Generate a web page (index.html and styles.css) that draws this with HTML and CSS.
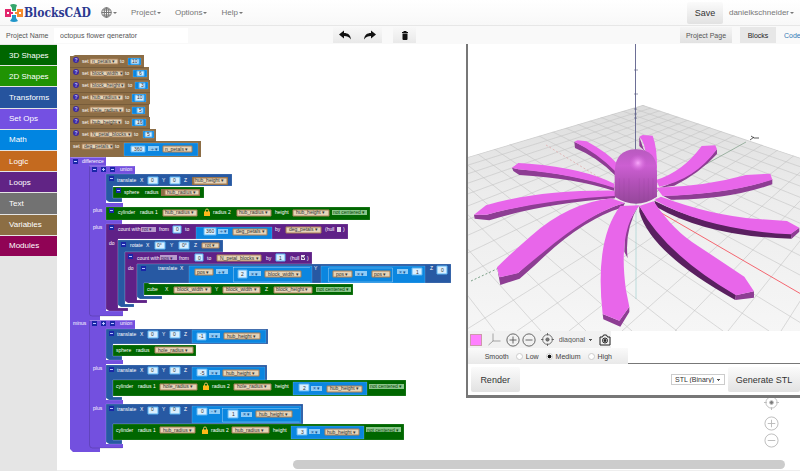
FILE: index.html
```html
<!DOCTYPE html>
<html lang="en">
<head>
    <meta charset="UTF-8">
    <meta name="viewport" content="width=device-width, initial-scale=1.0">
    <title>BlocksCAD</title>
    <link rel="stylesheet" href="styles.css">
</head>
<body>
    <!-- shared icons -->
    <svg class="defs" width="0" height="0">
        <symbol id="i-plus" viewBox="0 0 16 16"><circle cx="8" cy="8" r="7"/><path d="M8 4v8M4 8h8"/></symbol>
        <symbol id="i-minus" viewBox="0 0 16 16"><circle cx="8" cy="8" r="7"/><path d="M4 8h8"/></symbol>
        <symbol id="i-center" viewBox="0 0 16 16"><circle cx="8" cy="8" r="6"/><circle class="dot" cx="8" cy="8" r="2"/><path d="M8 0v3M8 13v3M0 8h3M13 8h3"/></symbol>
        <symbol id="i-lock" viewBox="0 0 6 8"><path d="M1.500 4V2.500a1.500 1.500 0 0 1 3 0V4" fill="none" stroke="#e8c060"/><path d="M0 3.500h6V8H0z" fill="#ffb818"/></symbol>
    </svg>

    <header class="navbar">
        <a href="#" class="brand">
            <svg width="20" height="20" viewBox="0 0 20 20">
                <path d="M6 2q3-2 7 0l-1 3v3H8V5z" fill="#35a66c"/>
                <path d="M1 6h6v3h2v2H7v3H1z" fill="#e2276d"/>
                <path d="M13 6h6v8h-6v-3h-2V9h2z" fill="#f58a2c"/>
                <path d="M8 12h4v3l2 3q-4 2-8 0l2-3z" fill="#2096c9"/>
                <path d="M3 9h2v2H3zM15 9h2v2h-2z" fill="#fff"/>
            </svg>
            <span>BlocksCAD</span>
        </a>
        <nav class="menu">
            <a href="#" class="globe" aria-label="Language">
                <svg width="11" height="11" viewBox="0 0 22 22"><circle cx="11" cy="11" r="9.500"/><ellipse cx="11" cy="11" rx="4.500" ry="9.500"/><path d="M11 1v20M1 11h20M3 6h16M3 16h16"/></svg><i class="caret"></i>
            </a>
            <a href="#">Project<i class="caret"></i></a>
            <a href="#">Options<i class="caret"></i></a>
            <a href="#">Help<i class="caret"></i></a>
        </nav>
        <button class="btn save">Save</button>
        <a href="#" class="user">danielkschneider<i class="caret"></i></a>
    </header>

    <div class="toolbar">
        <label for="project-name">Project Name</label>
        <input type="text" id="project-name" value="octopus flower generator">
        <div class="history">
            <button aria-label="Undo"><svg width="12" height="10" viewBox="0 0 24 20"><path d="M0 9L10 1v5c8 0 13 4 14 13-4-6-8-7-14-7v5z"/></svg></button>
            <button aria-label="Redo"><svg width="12" height="10" viewBox="0 0 24 20"><path d="M24 9L14 1v5C6 6 1 10 0 19c4-6 8-7 14-7v5z"/></svg></button>
        </div>
        <button class="trash" aria-label="Delete"><svg width="6" height="9" viewBox="0 0 12 18"><path d="M0 2h3V0h6v2h3v2H0zM1 5h10v11q0 2-2 2H3q-2 0-2-2z"/></svg></button>
        <div class="tabs">
            <button class="page">Project Page</button>
            <button class="active">Blocks</button>
            <a href="#">Code</a>
        </div>
    </div>

    <main>
        <aside>
            <nav class="toolbox">
                <a href="#" class="shapes3d">3D Shapes</a>
                <a href="#" class="shapes2d">2D Shapes</a>
                <a href="#" class="transforms">Transforms</a>
                <a href="#" class="setops">Set Ops</a>
                <a href="#" class="math">Math</a>
                <a href="#" class="logic">Logic</a>
                <a href="#" class="loops">Loops</a>
                <a href="#" class="textcat">Text</a>
                <a href="#" class="variables">Variables</a>
                <a href="#" class="modules">Modules</a>
            </nav>
        </aside>

        <section class="workspace">
            <svg class="blocks" width="100%" height="100%">
                <g transform="translate(-57 -44)">
                    <!-- variables -->
                    <path class="b-var" d="M70 56h3l2-1h69v12h5v13h1v24h-1v13h1v12h6v12h45v16H70z"/>
                    <path class="edge" d="M70 67.500h74M70 79.500h79M70 92.500h80M70 104.500h80M70 116.500h79M70 128.500h80M70 141.500h86"/>
                    <path class="b-math" d="M128 58h13v7h-13zM133 70h14v7h-14zM135 82h13v7h-13zM132 94h14v8h-14zM132 107h13v7h-13zM132 119h14v7h-14zM143 131h11v7h-11zM124 143h74v13h-74z"/>
                    <path class="f-var" d="M90 59h28v5H90zM90 71h33v5H90zM90 83h35v5H90zM90 95h33v5H90zM90 107h34v5H90zM90 119h32v5H90zM90 132h42v5H90zM82 144h31v5H82zM163 146h29v6h-29z"/>
                    <path class="f-num" d="M131 59h8v5h-8zM137 71h7v5h-7zM139 83h6v5h-6zM135 95h9v6h-9zM137 108h6v5h-6zM135 120h8v5h-8zM145 132h7v5h-7zM131 146h14v6h-14z"/>
                    <path class="f-op" d="M148 146h11v5h-11z"/>
                    <g class="help"><circle cx="76" cy="60" r="3"/><circle cx="76" cy="72" r="3"/><circle cx="76" cy="85" r="3"/><circle cx="76" cy="97" r="3"/><circle cx="76" cy="109" r="3"/><circle cx="76" cy="121" r="3"/><circle cx="76" cy="133" r="3"/></g>
                    <g class="mark"><text x="76" y="62">?</text><text x="76" y="74">?</text><text x="76" y="87">?</text><text x="76" y="99">?</text><text x="76" y="111">?</text><text x="76" y="123">?</text><text x="76" y="135">?</text></g>
                    <text y="63"><tspan x="82">set</tspan><tspan x="92" class="d">n_petals ▾</tspan><tspan x="120">to</tspan><tspan x="132" class="d">10</tspan></text>
                    <text y="75"><tspan x="82">set</tspan><tspan x="92" class="d">block_width ▾</tspan><tspan x="125">to</tspan><tspan x="139" class="d">6</tspan></text>
                    <text y="87"><tspan x="82">set</tspan><tspan x="92" class="d">block_height ▾</tspan><tspan x="128">to</tspan><tspan x="141" class="d">3</tspan></text>
                    <text y="99"><tspan x="82">set</tspan><tspan x="92" class="d">hub_radius ▾</tspan><tspan x="125">to</tspan><tspan x="137" class="d">10</tspan></text>
                    <text y="112"><tspan x="82">set</tspan><tspan x="92" class="d">hole_radius ▾</tspan><tspan x="126">to</tspan><tspan x="139" class="d">5</tspan></text>
                    <text y="124"><tspan x="82">set</tspan><tspan x="92" class="d">hub_height ▾</tspan><tspan x="125">to</tspan><tspan x="137" class="d">16</tspan></text>
                    <text y="136"><tspan x="82">set</tspan><tspan x="92" class="d">N_petal_blocks ▾</tspan><tspan x="134">to</tspan><tspan x="147" class="d">5</tspan></text>
                    <text y="148"><tspan x="73">set</tspan><tspan x="84" class="d">deg_petals ▾</tspan><tspan x="115">to</tspan></text>
                    <text y="151"><tspan x="134" class="d">360</tspan><tspan x="151" class="o">÷ ▾</tspan><tspan x="165" class="d">n_petals ▾</tspan></text>

                    <!-- difference -->
                    <path class="b-set" d="M70 157h36v9h29v8h-29v29h17v4h-17v13h16v4h-16v87h17v5h-23v4h35v9h-29v31h17v4h-17v36h17v4h-17v40h17v4h-23v4H73l-3-3z"/>
                    <path class="edge" d="M89.500 166v148q0 2 3 2h30M89.500 320v125q0 3 3 3h30"/>
                    <path class="edge light" d="M70.500 157.500h35M89.500 166h45M89.500 320.500h45"/>
                    <g class="gear"><path d="M73 159h5v5h-5zM92 167h5v5h-5zM101 167h5v5h-5zM110 167h5v5h-5zM92 321h5v5h-5zM101 321h5v5h-5zM110 321h5v5h-5z"/></g>
                    <path class="plus" d="M74 161.500h3M93 169.500h3M102 169.500h3M103.500 168v3M111 169.500h3M93 323.500h3M102 323.500h3M103.500 322v3M111 323.500h3"/>
                    <text x="82" y="163">difference</text>
                    <text x="120" y="171">union</text>
                    <text x="93" y="212">plus</text>
                    <text x="93" y="229">plus</text>
                    <text x="73" y="325">minus</text>
                    <text x="120" y="325">union</text>
                    <text x="93" y="370">plus</text>
                    <text x="93" y="410">plus</text>

                    <!-- translate / sphere -->
                    <path class="b-trans" d="M106 174h126v12H113v12h9v4h-13l-3-2z"/>
                    <path class="b-3d" d="M113 187h91v11h-91z"/>
                    <path class="b-varout" d="M192 177h36v8h-36zM161 189h39v7h-39z"/>
                    <path class="f-var" d="M194 178h33v6h-33zM165 190h34v5h-34z"/>
                    <path class="f-num" d="M148 177h10v7h-10zM170 177h10v7h-10z"/>
                    <text y="182"><tspan x="117">translate</tspan><tspan x="140">X</tspan><tspan x="151" class="d">0</tspan><tspan x="162">Y</tspan><tspan x="173" class="d">0</tspan><tspan x="184">Z</tspan><tspan x="195" class="d">hub_height ▾</tspan></text>
                    <text y="194"><tspan x="124">sphere</tspan><tspan x="145">radius</tspan><tspan x="167" class="d">hub_radius ▾</tspan></text>

                    <!-- cylinder -->
                    <path class="b-3d" d="M106 207h264v13H106z"/>
                    <path class="f-var" d="M163 210h34v6h-34zM237 210h34v6h-34zM293 210h36v6h-36z"/>
                    <path class="f-green" d="M332 210h35v5h-35z"/>
                    <use href="#i-lock" x="204" y="208" width="6" height="8"/>
                    <text y="214"><tspan x="118">cylinder</tspan><tspan x="140">radius 1</tspan><tspan x="165" class="d">hub_radius ▾</tspan><tspan x="213">radius 2</tspan><tspan x="239" class="d">hub_radius ▾</tspan><tspan x="275">height</tspan><tspan x="296" class="d">hub_height ▾</tspan><tspan x="333" class="g">not centered ▾</tspan></text>

                    <!-- count with pos -->
                    <path class="b-loop" d="M106 224h242v15H118v69h10v3h-19l-3-2z"/>
                    <path class="b-math" d="M196 227h76v12h-76z"/>
                    <path class="f-loop" d="M141 227h15v5h-15z"/>
                    <path class="f-num" d="M173 226h8v7h-8zM204 228h12v7h-12z"/>
                    <path class="f-op" d="M218 229h10v5h-10z"/>
                    <path class="f-var" d="M233 229h34v6h-34zM286 227h35v6h-35z"/>
                    <path class="f-box" d="M337 227h4v5h-4z"/>
                    <text y="231"><tspan x="118">count with</tspan><tspan x="142" class="p">rot ▾</tspan><tspan x="159">from</tspan><tspan x="176" class="d">0</tspan><tspan x="185">to</tspan><tspan x="275">by</tspan><tspan x="289" class="d">deg_petals ▾</tspan><tspan x="325">(hull</tspan><tspan x="343">)</tspan></text>
                    <text y="233"><tspan x="206" class="d">360</tspan><tspan x="220" class="o">÷ ▾</tspan><tspan x="236" class="d">deg_petals ▾</tspan></text>
                    <text x="109" y="245">do</text>

                    <!-- rotate -->
                    <path class="b-trans" d="M118 240h105v12h-98v52h9v3h-13l-3-2z"/>
                    <path class="f-num" d="M155 242h10v7h-10zM179 242h10v7h-10z"/>
                    <path class="f-var" d="M202 243h17v5h-17z"/>
                    <text y="247"><tspan x="130">rotate</tspan><tspan x="146">X</tspan><tspan x="157" class="d">0°</tspan><tspan x="170">Y</tspan><tspan x="182" class="d">0°</tspan><tspan x="194">Z</tspan><tspan x="205" class="d">rot ▾</tspan></text>

                    <!-- inner count with pos -->
                    <path class="b-loop" d="M125 252h187v12H137v36h10v3h-19l-3-2z"/>
                    <path class="f-loop" d="M160 255h17v5h-17z"/>
                    <path class="f-num" d="M195 254h8v7h-8zM276 254h9v7h-9z"/>
                    <path class="f-var" d="M217 255h44v6h-44z"/>
                    <path class="f-box" d="M301 255h4v5h-4z"/>
                    <path class="tick" d="M302 257l1 2 3-4"/>
                    <text y="260"><tspan x="137">count with</tspan><tspan x="161" class="p">pos ▾</tspan><tspan x="179">from</tspan><tspan x="198" class="d">0</tspan><tspan x="207">to</tspan><tspan x="220" class="d">N_petal_blocks ▾</tspan><tspan x="266">by</tspan><tspan x="279" class="d">1</tspan><tspan x="290">(hull</tspan><tspan x="307">)</tspan></text>
                    <text x="128" y="270">do</text>

                    <!-- inner translate -->
                    <path class="b-trans" d="M137 264h314v19H144v13h18v3h-22l-3-2z"/>
                    <path class="b-math" d="M189 266h123v17H189zM321 266h104v17H321z"/>
                    <path class="edge light" d="M233.500 267v15h77M233 267.500h77M328.500 268v14h64v-14z"/>
                    <path class="f-var" d="M195 269h18v6h-18zM265 271h36v6h-36zM333 271h19v6h-19zM372 271h18v6h-18z"/>
                    <path class="f-op" d="M216 269h12v5h-12zM249 271h12v5h-12zM355 271h12v5h-12zM397 269h11v5h-11z"/>
                    <path class="f-num" d="M238 270h9v8h-9zM412 268h10v7h-10zM437 266h10v8h-10z"/>
                    <text y="270"><tspan x="158">translate</tspan><tspan x="180">X</tspan><tspan x="314">Y</tspan><tspan x="430">Z</tspan></text>
                    <text y="274"><tspan x="197" class="d">pos ▾</tspan><tspan x="218" class="o">+ ▾</tspan><tspan x="399" class="o">× ▾</tspan><tspan x="416" class="d">1</tspan></text>
                    <text y="276"><tspan x="241" class="d">2</tspan><tspan x="251" class="o">× ▾</tspan><tspan x="268" class="d">block_width ▾</tspan><tspan x="336" class="d">pos ▾</tspan><tspan x="357" class="o">× ▾</tspan><tspan x="374" class="d">pos ▾</tspan></text>
                    <text x="441" y="272" class="d">0</text>

                    <!-- cube -->
                    <path class="b-3d" d="M144 283h4l2 1h203v11H144z"/>
                    <path class="f-var" d="M174 287h37v6h-37zM223 287h37v6h-37zM274 287h38v6h-38z"/>
                    <path class="f-green" d="M316 287h35v5h-35z"/>
                    <text y="291"><tspan x="147">cube</tspan><tspan x="165">X</tspan><tspan x="177" class="d">block_width ▾</tspan><tspan x="215">Y</tspan><tspan x="226" class="d">block_width ▾</tspan><tspan x="265">Z</tspan><tspan x="276" class="d">block_height ▾</tspan><tspan x="317" class="g">not centered ▾</tspan></text>

                    <!-- minus: translate / sphere -->
                    <path class="b-trans" d="M106 329h162v15H113v12h9v4h-13l-3-2z"/>
                    <path class="b-3d" d="M113 345h83v11h-83z"/>
                    <path class="b-math" d="M192 330h74v13h-74z"/>
                    <path class="f-num" d="M148 331h10v7h-10zM170 331h10v7h-10zM197 333h9v7h-9z"/>
                    <path class="f-op" d="M209 333h11v5h-11z"/>
                    <path class="f-var" d="M224 333h36v6h-36zM155 347h38v6h-38z"/>
                    <text y="336"><tspan x="117">translate</tspan><tspan x="140">X</tspan><tspan x="151" class="d">0</tspan><tspan x="162">Y</tspan><tspan x="173" class="d">0</tspan><tspan x="184">Z</tspan></text>
                    <text y="338"><tspan x="199" class="d">-1</tspan><tspan x="211" class="o">× ▾</tspan><tspan x="227" class="d">hub_height ▾</tspan></text>
                    <text y="352"><tspan x="116">sphere</tspan><tspan x="136">radius</tspan><tspan x="158" class="d">hole_radius ▾</tspan></text>

                    <!-- translate / cylinder -->
                    <path class="b-trans" d="M106 365h161v15H113v17h9v3h-13l-3-2z"/>
                    <path class="b-3d" d="M113 380h293v16H113z"/>
                    <path class="b-math" d="M192 367h73v13h-73zM293 382h74v13h-74z"/>
                    <path class="f-num" d="M148 367h10v7h-10zM170 367h10v7h-10zM197 369h10v7h-10zM299 384h10v7h-10z"/>
                    <path class="f-op" d="M209 370h11v5h-11zM311 386h11v5h-11z"/>
                    <path class="f-var" d="M223 370h36v6h-36zM160 384h37v6h-37zM234 384h37v6h-37zM327 386h35v6h-35z"/>
                    <path class="f-green" d="M369 384h35v5h-35z"/>
                    <use href="#i-lock" x="203" y="382" width="6" height="8"/>
                    <text y="372"><tspan x="117">translate</tspan><tspan x="140">X</tspan><tspan x="151" class="d">0</tspan><tspan x="162">Y</tspan><tspan x="173" class="d">0</tspan><tspan x="184">Z</tspan></text>
                    <text y="375"><tspan x="200" class="d">-5</tspan><tspan x="211" class="o">× ▾</tspan><tspan x="226" class="d">hub_height ▾</tspan></text>
                    <text y="388"><tspan x="116">cylinder</tspan><tspan x="138">radius 1</tspan><tspan x="163" class="d">hole_radius ▾</tspan><tspan x="212">radius 2</tspan><tspan x="237" class="d">hole_radius ▾</tspan><tspan x="275">height</tspan><tspan x="370" class="g">not centered ▾</tspan></text>
                    <text y="390"><tspan x="303" class="d">2</tspan><tspan x="313" class="o">× ▾</tspan><tspan x="330" class="d">hub_height ▾</tspan></text>

                    <!-- last translate / cylinder -->
                    <path class="b-trans" d="M106 404h197v20H113v16h9v4h-13l-3-2z"/>
                    <path class="b-3d" d="M113 424h291v16H113z"/>
                    <path class="b-math" d="M192 406h109v17H192zM291 426h73v13h-73z"/>
                    <path class="edge light" d="M222.500 408v14h77M222 408.500h77"/>
                    <path class="f-num" d="M148 407h10v7h-10zM170 407h10v7h-10zM197 408h10v7h-10zM228 410h10v8h-10zM297 428h10v7h-10z"/>
                    <path class="f-op" d="M209 409h11v5h-11zM241 412h11v5h-11zM309 429h11v5h-11z"/>
                    <path class="f-var" d="M256 411h36v6h-36zM160 427h35v6h-35zM232 427h37v6h-37zM325 429h34v6h-34z"/>
                    <path class="f-green" d="M366 427h35v5h-35z"/>
                    <use href="#i-lock" x="202" y="426" width="6" height="8"/>
                    <text y="411"><tspan x="117">translate</tspan><tspan x="140">X</tspan><tspan x="151" class="d">0</tspan><tspan x="162">Y</tspan><tspan x="173" class="d">0</tspan><tspan x="184">Z</tspan></text>
                    <text y="413"><tspan x="201" class="d">0</tspan><tspan x="211" class="o">- ▾</tspan></text>
                    <text y="416"><tspan x="232" class="d">1</tspan><tspan x="243" class="o">× ▾</tspan><tspan x="259" class="d">hub_height ▾</tspan></text>
                    <text y="432"><tspan x="116">cylinder</tspan><tspan x="138">radius 1</tspan><tspan x="163" class="d">hub_radius ▾</tspan><tspan x="211">radius 2</tspan><tspan x="235" class="d">hub_radius ▾</tspan><tspan x="273">height</tspan><tspan x="367" class="g">not centered ▾</tspan></text>
                    <text y="434"><tspan x="301" class="d">3</tspan><tspan x="311" class="o">× ▾</tspan><tspan x="327" class="d">hub_height ▾</tspan></text>

                    <g class="gear"><path d="M109 176h5v5h-5zM116 188h5v5h-5zM109 208h5v5h-5zM109 225h5v5h-5zM121 242h5v5h-5zM128 254h5v5h-5zM141 266h5v5h-5zM109 331h5v5h-5zM109 367h5v5h-5zM109 406h5v5h-5z"/></g>
                    <path class="plus" d="M110 178.500h3M117 190.500h3M110 210.500h3M110 227.500h3M122 244.500h3M129 256.500h3M142 268.500h3M110 333.500h3M110 369.500h3M110 408.500h3"/>
                </g>
            </svg>

            <div class="zoomer">
                <button aria-label="Center"><svg width="15" height="15"><use href="#i-center"/></svg></button>
                <button aria-label="Zoom in"><svg width="15" height="15"><use href="#i-plus"/></svg></button>
                <button aria-label="Zoom out"><svg width="15" height="15"><use href="#i-minus"/></svg></button>
            </div>
            <div class="scrollbar"></div>

            <div class="viewer">
                <svg class="scene" viewBox="467 44 333 287" preserveAspectRatio="xMinYMin slice">
                    <defs>
                        <clipPath id="floor"><path d="M642 105L467 157v174h333V158z"/></clipPath>
                        <linearGradient id="ground" x1="0" y1="0" x2="0" y2="1"><stop offset="0" stop-color="#dcdcdc"/><stop offset=".4" stop-color="#ececec"/><stop offset="1" stop-color="#f6f6f6"/></linearGradient>
                        <linearGradient id="hub" x1="0" y1="0" x2="0" y2="1"><stop offset="0" stop-color="#b85abf"/><stop offset=".3" stop-color="#cc5fd2"/><stop offset=".6" stop-color="#b352b9"/><stop offset="1" stop-color="#95479a"/></linearGradient>
                        <radialGradient id="shine"><stop offset="0" stop-color="#f9a8fb"/><stop offset="1" stop-color="#d868de" stop-opacity="0"/></radialGradient>
                    </defs>
                    <g clip-path="url(#floor)">
                        <path d="M467 100h333v231H467z" fill="url(#ground)"/>
                        <path class="grid" d="M990 2L-118 331M990 2L-65 331M990 2L-12 331M990 2L40 331M990 2L93 331M990 2L146 331M990 2L199 331M990 2L252 331M990 2L304 331M990 2L357 331M990 2L463 331M990 2L516 331M990 2L568 331M990 2L621 331M990 2L674 331M990 2L727 331M990 2L780 331M990 2L832 331M990 2L885 331"/>
                        <path class="grid" d="M208-40L1315 331M208-40L1269 331M208-40L1224 331M208-40L1178 331M208-40L1132 331M208-40L1087 331M208-40L1041 331M208-40L996 331M208-40L950 331M208-40L904 331M208-40L813 331M208-40L768 331M208-40L722 331M208-40L676 331M208-40L631 331M208-40L585 331M208-40L540 331M208-40L494 331"/>
                    </g>
                    <path d="M635 203L745 142" stroke="#7d9c85" stroke-width=".7"/>
                    <path d="M470 281L500 267" stroke="#5b8a6b" stroke-width=".8" stroke-dasharray="2 2"/>
                    <path d="M545 145L635 200" stroke="#d99" stroke-width=".6" stroke-dasharray="2 2"/>
                    <path d="M650 207L800 294" stroke="#f5434f" stroke-width=".8"/>
                    <path d="M635 200v99" stroke="#9cc" stroke-width=".6"/>
                    <path d="M634.500 44v108" stroke="#6d6f96" stroke-width="1"/>
                    <path d="M633 70h4M633 94h4M633 109h3M633 114h3M633 118h3" stroke="#55577e" stroke-width=".6"/>
                    <path d="M749 140l4-3M750 136l3 2h5" stroke="#333" fill="none" stroke-width=".8"/>
                    <!-- petals, going round the hub -->
                    <g transform="translate(460 40) scale(.3333)">
                        <g class="side">
                            <path d="M535 290l13 38 10 12-23-22z"/>
                            <path d="M340 305Q410 335 462 390v16Q410 352 342 324z"/>
                            <path d="M153 383l19 5Q340 402 460 442v11Q340 414 175 405l-18-12z"/>
                            <path d="M39 524l38 0Q250 475 462 466v9Q240 492 85 541l-44-5z"/>
                            <path d="M108 682l8 30 56-14Q350 530 492 488l-6 14Q360 540 225 673l-49 43-58 19z"/>
                            <path d="M425 822l50 20 30-42v16l-27 44-51-22zM533 496Q490 570 500 655l-10-20 2-70z"/>
                        </g>
                        <g class="dark">
                            <path d="M535 498Q620 640 825 764l-2 16Q570 640 535 515z"/>
                            <path d="M580 482Q740 565 990 581l2 15Q740 590 585 500z"/>
                        </g>
                        <g class="side">
                            <path d="M824 766l55-12v19l-56 7zM989 581l26-18v12l-23 21z"/>
                            <path d="M605 467Q800 462 934 418v15Q800 480 630 479z"/>
                            <path d="M768 328v14Q715 400 640 437l-45 6Q700 410 768 328z"/>
                        </g>
                        <g class="top">
                            <path d="M535 290l10-5 30 2q14 35 13 100l-33-30q-1-50-20-67z"/>
                            <path d="M340 305l10-4 27 3q64 35 90 66l-5 23Q410 340 340 305z"/>
                            <path d="M153 383l19-14 33 2q165 14 255 60v13Q340 404 172 388z"/>
                            <path d="M39 524l36-28Q230 450 460 452l10 15Q250 478 77 524z"/>
                            <path d="M108 682Q150 640 210 588 320 490 450 475l42 14Q390 516 245 638l-75 62-54 12z"/>
                            <path d="M478 498l58-2Q470 570 495 750l10 50-30 42-50-20Q400 600 478 498z"/>
                            <path d="M535 498l43-14q60 90 132 133l140 93 29 44-54 12Q610 640 535 498z"/>
                            <path d="M580 480l20-10q150 56 290 67l88 6 37 20-26 20Q740 570 580 480z"/>
                            <path d="M586 443q144-3 269-38l73-4 6 18Q800 463 605 468z"/>
                            <path d="M585 420q80-24 137-102l41-2 5 12Q700 420 595 440z"/>
                        </g>
                        <path d="M461 395Q463 328 525 328q63 0 63 67v75q-63 42-127 0z" fill="url(#hub)"/>
                        <path class="facet" d="M475 415v62M489 415v68M504 415v70M535 415v72M549 415v70M562 415v66M576 415v60"/>
                        <circle cx="531" cy="369" r="26" fill="url(#shine)"/>
                    </g>
                </svg>

                <div class="view-tools">
                    <button class="swatch" aria-label="Color"></button>
                    <button aria-label="Axes"><svg width="13" height="13" viewBox="0 0 26 26"><path d="M10 1v15L1 24M10 16h15"/></svg></button>
                    <button aria-label="Zoom in"><svg width="14" height="14"><use href="#i-plus"/></svg></button>
                    <button aria-label="Zoom out"><svg width="14" height="14"><use href="#i-minus"/></svg></button>
                    <button class="recenter" aria-label="Center view"><svg width="13" height="13"><use href="#i-center"/></svg></button>
                    <select class="view-select" aria-label="View"><option>diagonal</option></select>
                    <button class="camera" aria-label="Take picture"><svg width="12" height="12" viewBox="0 0 24 24"><path d="M2 6h5l2-4h6l2 4h5v16H2z"/><circle cx="12" cy="13" r="5"/><circle class="dot" cx="12" cy="13" r="2"/></svg></button>
                </div>
                <div class="smooth-row">
                    <div class="smooth">
                        <span>Smooth</span>
                        <label><input type="radio" name="smooth">Low</label>
                        <label><input type="radio" name="smooth" checked>Medium</label>
                        <label><input type="radio" name="smooth">High</label>
                    </div>
                </div>
                <div class="render-row">
                    <button class="btn render">Render</button>
                    <select class="format" aria-label="File format"><option>STL (Binary)</option></select>
                    <button class="btn generate">Generate STL</button>
                </div>
            </div>
        </section>
    </main>
</body>
</html>
```
FILE: styles.css
```css
* {
    box-sizing: border-box;
}

body {
    margin: 0;
    height: 100vh;
    display: flex;
    flex-direction: column;
    overflow: hidden;
    font-family: "Liberation Sans", Arial, sans-serif;
    font-size: 8px;
    color: #333;
    background-color: #fff;
}

a {
    color: #777;
    text-decoration: none;
}

button, input, select {
    font-family: inherit;
    font-size: inherit;
    color: inherit;
    margin: 0;
    padding: 0;
    border: none;
    background: none;
}

button {
    cursor: pointer;
}

svg {
    display: block;
}

.defs {
    position: absolute;
}

/* Navbar */
.navbar {
    display: flex;
    align-items: center;
    height: 26px;
    flex-shrink: 0;
    padding: 0 6px 0 4px;
    background: linear-gradient(#fff, #f8f8f8);
    border-bottom: 1px solid #e7e7e7;
}

.brand {
    display: flex;
    align-items: center;
    width: 97px;
    font-family: "DejaVu Serif Condensed", "DejaVu Serif", serif;
    font-weight: bold;
    font-size: 12px;
    color: #2b3990;
}

.menu {
    display: flex;
    align-items: center;
    gap: 14px;
    flex: 1;
}

.menu a {
    display: flex;
    align-items: center;
}

.globe svg {
    fill: none;
    stroke: #777;
    stroke-width: 2;
}

.caret {
    display: inline-block;
    margin-left: 1px;
    border: 2px solid transparent;
    border-top-color: #777;
    border-bottom: none;
    vertical-align: middle;
}

.btn {
    border-radius: 2px;
    background: linear-gradient(#fbfbfb, #e2e2e2);
}

.save {
    width: 36px;
    height: 22px;
    font-size: 9px;
    margin-right: 6px;
}

/* Toolbar */
.toolbar {
    display: flex;
    align-items: center;
    height: 18px;
    flex-shrink: 0;
    padding-left: 6px;
    font-size: 7px;
    color: #555;
    background-color: #f9f9f9;
    white-space: nowrap;
}

.toolbar label {
    width: 48px;
}

.toolbar input {
    width: 134px;
    height: 15px;
    padding-left: 6px;
    background-color: #fff;
}

.history {
    display: flex;
    width: 49px;
    height: 16px;
    margin-left: 145px;
    background: linear-gradient(#f8f8f8, #e9e9e9);
}

.history button, .trash {
    flex: 1;
    display: flex;
    align-items: center;
    justify-content: center;
}

.trash {
    flex: none;
    width: 23px;
    height: 16px;
    margin-left: 11px;
    background: linear-gradient(#f8f8f8, #e9e9e9);
}

.history svg, .trash svg {
    fill: #111;
}

.tabs {
    display: flex;
    align-items: center;
    margin-left: auto;
}

.tabs button {
    height: 16px;
    width: 36px;
    background-color: #e7e7e7;
}

.tabs .page {
    width: 52px;
    margin-right: 8px;
    background: linear-gradient(#f5f5f5, #e2e2e2);
}

.tabs .active {
    color: #222;
}

.tabs a {
    width: 16px;
    margin-left: 8px;
    overflow: hidden;
    color: #337ab7;
}

main {
    flex: 1;
    display: flex;
    min-height: 0;
}

/* Toolbox */
aside {
    width: 57px;
    background-color: #e5e5e5;
}

.toolbox {
    display: grid;
    grid-auto-rows: 1fr;
    gap: 1px;
    height: 212px;
    padding-top: 1px;
}

.toolbox a {
    display: flex;
    align-items: center;
    padding-left: 9px;
    color: #fff;
}

.shapes3d { background-color: #006600; }
.shapes2d { background-color: #209303; }
.transforms { background-color: #26549e; }
.setops { background-color: #7450e2; }
.math { background-color: #0185e1; }
.logic { background-color: #c46a1f; }
.loops { background-color: #612485; }
.textcat { background-color: #727272; }
.variables { background-color: #8c6e44; }
.modules { background-color: #900355; }

/* Blocks */
.workspace {
    flex: 1;
    position: relative;
    overflow: hidden;
    border-bottom: 1px solid #eee;
}

.blocks text {
    font-size: 5px;
    fill: #fff;
}

.blocks .d { fill: #333; }
.blocks .o { fill: #0a4f90; }
.blocks .p { fill: #402060; }
.blocks .g { fill: #0a4a0a; }

.blocks .mark text {
    font-weight: bold;
    text-anchor: middle;
    fill: #c9c4ff;
}

.b-var, .b-varout { fill: #8c6d45; }
.b-set { fill: #7350df; }
.b-trans { fill: #2759a3; }
.b-3d { fill: #006700; }
.b-loop { fill: #5f2187; }
.b-math { fill: #0b86e0; }

.b-trans, .b-3d, .b-loop, .b-math {
    stroke: #fff;
    stroke-opacity: .15;
    stroke-width: 1;
}

.f-var { fill: #e5d3b8; stroke: #a87f55; }
.f-num { fill: #d9efff; stroke: #5ab4f2; }
.f-op { fill: #8fcbf6; }
.f-loop { fill: #b79acb; }
.f-green { fill: #8cc68c; }
.f-box { fill: #e6dcee; }

.tick {
    fill: none;
    stroke: #402060;
}

.edge {
    fill: none;
    stroke: #000;
    stroke-opacity: .15;
}

.light {
    stroke: #fff;
    stroke-opacity: .3;
}

.help { fill: #3d2a9e; }
.gear { fill: #1a27a8; }

.plus {
    fill: none;
    stroke: #b9c4ff;
}

.zoomer {
    position: absolute;
    right: 21px;
    bottom: 22px;
    display: flex;
    flex-direction: column;
    gap: 2px;
}

.zoomer button:first-child {
    margin-bottom: 4px;
}

.zoomer svg {
    fill: none;
    stroke: #bbb;
}

#i-center .dot {
    fill: #777;
}

.scrollbar {
    position: absolute;
    left: 236px;
    right: 15px;
    bottom: 1px;
    height: 9px;
    border-radius: 5px;
    background-color: #ccc;
}

/* 3D viewer */
.viewer {
    position: absolute;
    top: 0;
    left: 55%;
    right: 0;
    height: 354px;
    display: flex;
    flex-direction: column;
    background-color: #fff;
    border-left: 2px solid #777;
    border-bottom: 3px solid #777;
}

.scene {
    width: 100%;
    flex: 1;
    min-height: 0;
}

.grid {
    fill: none;
    stroke: #c4c4c4;
    stroke-width: .6;
}

.side { fill: #8d3d93; }
.dark { fill: #5a2060; }
.top { fill: #e866ea; }

.facet {
    stroke: #8a3c90;
    stroke-opacity: .25;
    stroke-width: 2;
}

.view-tools {
    display: flex;
    align-items: center;
    height: 17px;
    font-size: 7px;
    background: linear-gradient(90deg, #f1f1f1 143px, #fff 143px);
}

.view-tools svg {
    fill: none;
    stroke: #555;
}

.view-tools button {
    width: 16px;
    display: flex;
    justify-content: center;
}

.view-tools .swatch {
    width: 12px;
    height: 12px;
    margin: 0 5px 0 2px;
    background-color: #ff80ff;
    border: 1px solid #c9a;
}

.view-tools button:nth-child(2) {
    margin-right: 2px;
}

.view-tools .recenter {
    margin: 0 3px;
}

.view-select, .format {
    appearance: none;
    color: #555;
    background-image: linear-gradient(45deg, transparent 50%, #555 50%), linear-gradient(-45deg, transparent 50%, #555 50%);
    background-image: linear-gradient(45deg, transparent 50%, #555 50%), linear-gradient(135deg, #555 50%, transparent 50%);
    background-size: 2px 2px;
    background-repeat: no-repeat;
    background-position: right 5px center, right 3px center;
}

.view-select {
    width: 37px;
    height: 16px;
}

.view-tools .camera {
    margin-left: 1px;
}

.view-tools .camera svg {
    stroke: #222;
    stroke-width: 2;
}

.camera .dot {
    fill: #222;
}

.smooth-row {
    height: 16px;
    border-bottom: 1px solid #777;
}

.smooth {
    display: flex;
    align-items: center;
    gap: 7px;
    width: 160px;
    height: 16px;
    padding-left: 17px;
    font-size: 7px;
    color: #444;
    background: linear-gradient(#fafafa, #e9e9e9);
}

.smooth label {
    display: flex;
    align-items: center;
    gap: 3px;
}

.smooth input {
    appearance: none;
    width: 7px;
    height: 7px;
    border: 1px solid #ccc;
    border-radius: 50%;
    background-color: #fff;
}

.smooth input:checked {
    background: radial-gradient(#111 50%, #fff 60%);
}

.render-row {
    display: flex;
    align-items: center;
    height: 31px;
    padding-left: 3px;
}

.render, .generate {
    height: 25px;
    font-size: 9px;
}

.render {
    width: 49px;
}

.format {
    width: 54px;
    height: 11px;
    margin-left: auto;
    padding-left: 3px;
    border: 1px solid #ccc;
    font-size: 7px;
    color: #333;
}

.generate {
    width: 72px;
    margin-left: 3px;
}
```
